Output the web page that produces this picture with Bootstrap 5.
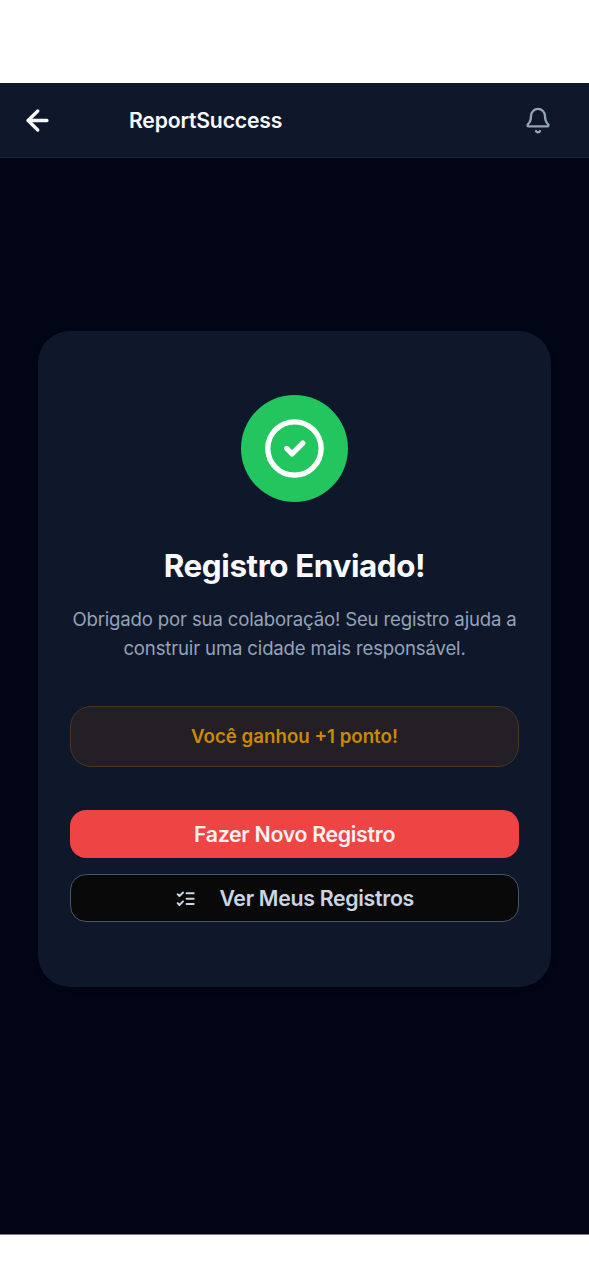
<!DOCTYPE html>
<html lang="pt-BR">
<head>
<meta charset="utf-8">
<meta name="viewport" content="width=device-width, initial-scale=1">
<title>ReportSuccess</title>
<link href="https://cdn.jsdelivr.net/npm/bootstrap@5.3.0/dist/css/bootstrap.min.css" rel="stylesheet">
<style>
body{font-family:Inter,"Liberation Sans",sans-serif;background:#fff;padding:83px 0 45px;height:1280px;overflow:hidden}
.screen{background:#020515;height:1152px;border-bottom:1px solid #777984}
.topbar{height:75px;background:#0f172a;border-bottom:1px solid #172438;padding:0 37px 0 22px}
.topbar h1{font-size:21.2px;line-height:28px;font-weight:600;color:#f8fafc;letter-spacing:-.2px;margin-left:77px}
.success-card{width:513.5px;height:656px;margin-top:173px;border-radius:32px;background:#0f172a;padding:64px 32px;box-shadow:0 2px 5px rgba(0,0,0,.2)}
.disc{width:107px;height:107px;background:#22c55e}
.success-card h2{font-size:31.4px;line-height:43px;font-weight:700;color:#f8fafc;letter-spacing:-.4px;margin-top:43px;white-space:nowrap}
.message{font-size:18.6px;line-height:29.4px;color:#94a3b8;letter-spacing:-.17px;margin-top:16.5px;white-space:nowrap}
.points{height:61.5px;margin-top:42.500px;border:1.3px solid #4b3424;border-radius:21px;background:#231f24;color:#ca8a04;font-size:18.7px;font-weight:600}
.action{height:48px;border-radius:16px;font-size:21.3px;font-weight:600;line-height:1;padding:2px 0 0;letter-spacing:-.3px}
.primary,.primary:hover{background:#ef4444;color:#fef2f2;margin-top:42.5px}
.secondary,.secondary:hover{background:#090909;border:1.3px solid #475569;color:#cbd5e1;margin-top:16.5px;padding-top:1px}
.secondary svg{margin-right:23px}
</style>
</head>
<body>
<div class="screen">
  <header class="topbar d-flex align-items-center">
    <svg width="30" height="30" viewBox="0 0 30 30" fill="none" stroke="#f8fafc" stroke-width="3.3" stroke-linecap="round" stroke-linejoin="round"><path d="M25 15.500H6M15.800 6 6 15.500l9.800 9.500"/></svg>
    <h1 class="mb-0">ReportSuccess</h1>
    <svg class="ms-auto" width="28" height="28" viewBox="0 0 24 24" fill="none" stroke="#94a3b8" stroke-width="2" stroke-linecap="round" stroke-linejoin="round"><path transform="translate(0 .5)" d="M10.300 21a1.940 1.940 0 0 0 3.400 0M3.300 15.300A1 1 0 0 0 4 17h16a1 1 0 0 0 .7-1.700C19.400 14 18 12.500 18 8A6 6 0 0 0 6 8c0 4.500-1.400 6-2.700 7.300"/></svg>
  </header>
  <main class="success-card mx-auto d-flex flex-column align-items-center text-center">
    <div class="disc rounded-circle d-flex align-items-center justify-content-center flex-shrink-0">
      <svg width="64" height="64" viewBox="0 0 24 24" fill="none" stroke="#fff" stroke-width="2" stroke-linecap="round" stroke-linejoin="round"><circle cx="11.800" cy="11.800" r="10"/><path d="m8.900 11.800 2 2 4-4"/></svg>
    </div>
    <h2 class="mb-0">Registro Enviado!</h2>
    <p class="message mb-0">Obrigado por sua colaboração! Seu registro ajuda a<br>construir uma cidade mais responsável.</p>
    <div class="points w-100 d-flex align-items-center justify-content-center flex-shrink-0">Você ganhou +1 ponto!</div>
    <button class="action primary btn w-100 border-0 flex-shrink-0" type="button">Fazer Novo Registro</button>
    <button class="action secondary btn w-100 d-flex align-items-center justify-content-center flex-shrink-0" type="button">
      <svg width="21.400" height="21.400" viewBox="0 0 24 24" fill="none" stroke="currentColor" stroke-width="2.200" stroke-linecap="round" stroke-linejoin="round"><path d="m3 17 2 2 4-4M3 7l2 2 4-4M13 6h8M13 12h8M13 18h8"/></svg>
      <span>Ver Meus Registros</span>
    </button>
  </main>
</div>
<script src="https://cdn.jsdelivr.net/npm/bootstrap@5.3.0/dist/js/bootstrap.bundle.min.js"></script>
</body>
</html>
